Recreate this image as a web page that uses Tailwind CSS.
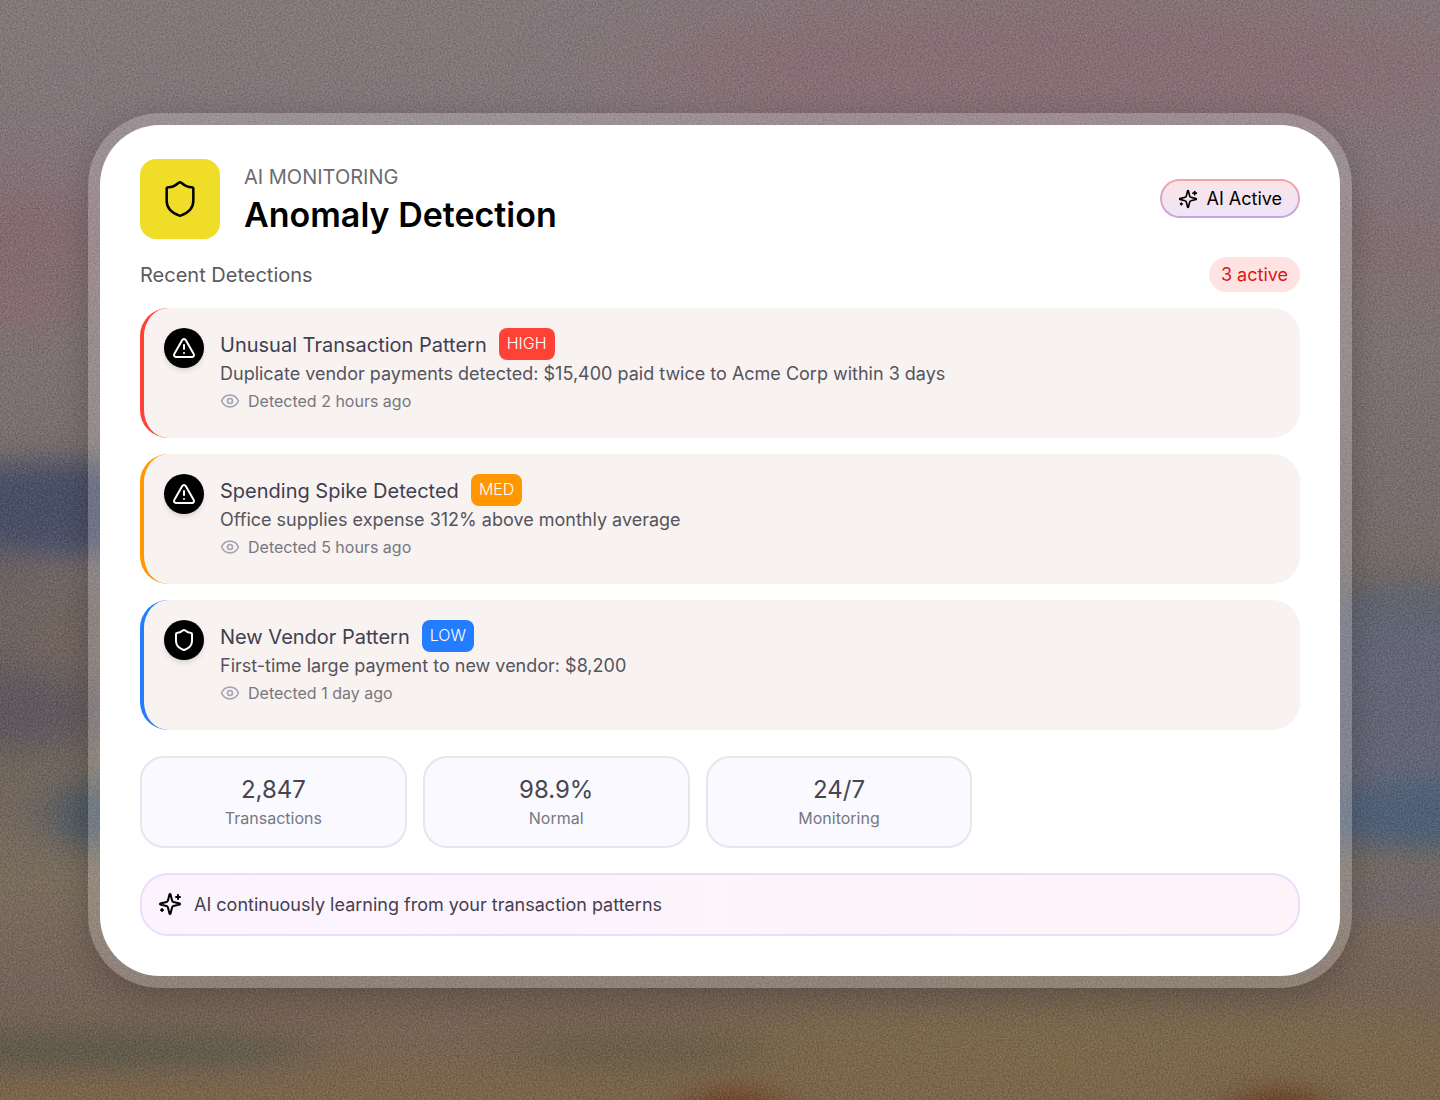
<!DOCTYPE html>
<html lang="en">
<head>
    <meta charset="UTF-8">
    <meta name="viewport" content="width=device-width, initial-scale=1.0">
    <title>Anomaly Detection</title>
    <script src="https://cdn.jsdelivr.net/npm/@tailwindcss/browser@4"></script>
</head>
<body class="relative isolate min-h-screen flex items-center justify-center px-[88px] py-[112px] bg-[#7c6c68] font-['Inter','Liberation_Sans',sans-serif] overflow-x-hidden">

<!-- Icons -->
<svg class="hidden">
    <symbol id="icon-shield" viewBox="0 0 24 24" fill="none" stroke="currentColor" stroke-linecap="round" stroke-linejoin="round">
        <path d="M20 13c0 5-3.5 7.5-7.66 8.95a1 1 0 0 1-.67-.01C7.5 20.5 4 18 4 13V6a1 1 0 0 1 1-1c2 0 4.5-1.2 6.24-2.72a1.17 1.17 0 0 1 1.52 0C14.51 3.81 17 5 19 5a1 1 0 0 1 1 1z"/>
    </symbol>
    <symbol id="icon-alert" viewBox="0 0 24 24" fill="none" stroke="currentColor" stroke-linecap="round" stroke-linejoin="round">
        <path d="m21.73 18-8-14a2 2 0 0 0-3.48 0l-8 14A2 2 0 0 0 4 21h16a2 2 0 0 0 1.73-3"/>
        <path d="M12 9v4"/>
        <path d="M12 17h.01"/>
    </symbol>
    <symbol id="icon-eye" viewBox="0 0 24 24" fill="none" stroke="currentColor" stroke-linecap="round" stroke-linejoin="round">
        <path d="M2.06 12.35a1 1 0 0 1 0-.7 10.75 10.75 0 0 1 19.88 0 1 1 0 0 1 0 .7 10.75 10.75 0 0 1-19.88 0"/>
        <circle cx="12" cy="12" r="3"/>
    </symbol>
    <symbol id="icon-sparkles" viewBox="0 0 24 24" fill="none" stroke="currentColor" stroke-linecap="round" stroke-linejoin="round">
        <path d="M9.94 15.5A2 2 0 0 0 8.5 14.06l-6.14-1.58a.5.5 0 0 1 0-.96L8.5 9.94A2 2 0 0 0 9.94 8.5l1.58-6.14a.5.5 0 0 1 .96 0l1.58 6.14a2 2 0 0 0 1.44 1.44l6.14 1.58a.5.5 0 0 1 0 .96l-6.14 1.58a2 2 0 0 0-1.44 1.44l-1.58 6.14a.5.5 0 0 1-.96 0z"/>
        <path d="M20 3v4"/>
        <path d="M22 5h-4"/>
        <path d="M4 17v2"/>
        <path d="M5 18H3"/>
    </symbol>
</svg>

<!-- Backdrop -->
<svg class="absolute inset-0 -z-10 w-full h-full" viewBox="0 0 1440 1100" preserveAspectRatio="none" aria-hidden="true">
    <defs>
        <linearGradient id="base" x1="0" y1="0" x2="0" y2="1">
            <stop offset="0" stop-color="#84797b"/>
            <stop offset="0.2" stop-color="#83757a"/>
            <stop offset="0.32" stop-color="#7f7373"/>
            <stop offset="0.5" stop-color="#776d6b"/>
            <stop offset="0.6" stop-color="#6b625f"/>
            <stop offset="0.8" stop-color="#7b6e5e"/>
            <stop offset="0.9" stop-color="#75645a"/>
            <stop offset="1" stop-color="#7d674c"/>
        </linearGradient>
        <filter id="soft" filterUnits="userSpaceOnUse" x="-200" y="-200" width="1840" height="1500" color-interpolation-filters="sRGB"><feGaussianBlur stdDeviation="26 14"/></filter>
        <filter id="wide" filterUnits="userSpaceOnUse" x="-300" y="-300" width="2040" height="1700" color-interpolation-filters="sRGB"><feGaussianBlur stdDeviation="60 30"/></filter>
        <filter id="grain" x="0" y="0" width="100%" height="100%" color-interpolation-filters="sRGB">
            <feTurbulence type="fractalNoise" baseFrequency="0.6" numOctaves="2" seed="4"/>
            <feColorMatrix values="1.5 0 0 0 -0.28  1.5 0 0 0 -0.28  1.5 0 0 0 -0.28  0 0 0 0 1"/>
        </filter>
    </defs>
    <rect width="1440" height="1100" fill="url(#base)"/>
    <g filter="url(#wide)">
        <ellipse cx="1060" cy="70" rx="420" ry="70" fill="#896f76"/>
        <ellipse cx="0" cy="240" rx="120" ry="60" fill="#866b71"/>
        <ellipse cx="1380" cy="245" rx="60" ry="25" fill="#85696b"/>
        <ellipse cx="1100" cy="1050" rx="420" ry="40" fill="#7d6b4a"/>
    </g>
    <g filter="url(#soft)">
        <ellipse cx="0" cy="305" rx="70" ry="14" fill="#8b6c71"/>
        <ellipse cx="60" cy="508" rx="170" ry="48" fill="#4a5068"/>
        <ellipse cx="0" cy="580" rx="40" ry="20" fill="#6b6260"/>
        <ellipse cx="80" cy="650" rx="60" ry="50" fill="#736660"/>
        <ellipse cx="10" cy="710" rx="90" ry="40" fill="#605a60"/>
        <ellipse cx="110" cy="815" rx="60" ry="34" fill="#4c5966"/>
        <rect x="1300" y="600" width="240" height="250" fill="#656777"/>
        <ellipse cx="1420" cy="605" rx="80" ry="22" fill="#606672"/>
        <ellipse cx="1440" cy="815" rx="110" ry="36" fill="#4f6179"/>
        <ellipse cx="1410" cy="895" rx="90" ry="20" fill="#72676f"/>
        <ellipse cx="80" cy="1050" rx="240" ry="18" fill="#5d5a4c"/>
        <ellipse cx="640" cy="1050" rx="130" ry="18" fill="#6a5f49"/>
        <ellipse cx="735" cy="1112" rx="44" ry="20" fill="#6b3418"/>
        <ellipse cx="1280" cy="1112" rx="44" ry="20" fill="#643018"/>
    </g>
    <rect class="mix-blend-soft-light" width="1440" height="1100" filter="url(#grain)" opacity="0.3"/>
</svg>

<main class="w-full max-w-[1264px] rounded-[72px] bg-white/20 p-3 shadow-[0_8px_32px_rgba(0,0,0,0.2)]">
    <div class="rounded-[60px] bg-white px-10 pt-[34px] pb-10">

        <!-- Header -->
        <header class="flex items-center justify-between">
            <div class="flex items-center gap-6">
                <div class="flex size-20 items-center justify-center rounded-2xl bg-[#efdd28]">
                    <svg class="size-10 stroke-[1.5]"><use href="#icon-shield"/></svg>
                </div>
                <div class="pt-1">
                    <p class="text-[20px] leading-7 text-[#6b6b70]">AI MONITORING</p>
                    <h1 class="text-[34px] leading-[48px] font-semibold text-black">Anomaly Detection</h1>
                </div>
            </div>
            <button type="button" class="flex h-[39px] items-center gap-2 rounded-full border-2 border-transparent px-4 text-[18px] text-black [background:linear-gradient(#fbe4e7,#efe4f7)_padding-box,linear-gradient(#f2a5a9,#c3a6e3)_border-box]">
                <svg class="size-5 stroke-2"><use href="#icon-sparkles"/></svg>
                AI Active
            </button>
        </header>

        <!-- Detections -->
        <section>
            <div class="mt-[18px] flex items-center justify-between">
                <h2 class="pt-[2px] text-[20px] text-[#5a5a60]">Recent Detections</h2>
                <span class="rounded-full bg-[#ffe3e3] px-3 text-[18px] leading-[35px] text-[#d81616]">3 active</span>
            </div>

            <ul class="mt-4 flex flex-col gap-4">
                <li class="flex gap-4 rounded-[28px] border-l-4 border-[#ff4136] bg-[#f8f2f1] px-5 pt-5 pb-[23px]">
                    <div class="flex size-10 shrink-0 items-center justify-center rounded-full bg-black text-white shadow-md">
                        <svg class="size-6 stroke-2"><use href="#icon-alert"/></svg>
                    </div>
                    <div>
                        <div class="flex h-8 items-center gap-3">
                            <h3 class="pt-[2px] text-[20px] text-[#3f3f50]">Unusual Transaction Pattern</h3>
                            <span class="rounded-lg bg-[#ff4136] px-2 pb-[2px] text-[16px] leading-[30px] font-light text-white">HIGH</span>
                        </div>
                        <p class="text-[18px] leading-7 text-[#54545c]">Duplicate vendor payments detected: $15,400 paid twice to Acme Corp within 3 days</p>
                        <p class="flex items-center gap-2 text-[16px] leading-[27px] text-[#77777f]">
                            <svg class="size-5 stroke-2 text-[#a3a6b4]"><use href="#icon-eye"/></svg>
                            Detected 2 hours ago
                        </p>
                    </div>
                </li>
                <li class="flex gap-4 rounded-[28px] border-l-4 border-[#ff9800] bg-[#f8f2f1] px-5 pt-5 pb-[23px]">
                    <div class="flex size-10 shrink-0 items-center justify-center rounded-full bg-black text-white shadow-md">
                        <svg class="size-6 stroke-2"><use href="#icon-alert"/></svg>
                    </div>
                    <div>
                        <div class="flex h-8 items-center gap-3">
                            <h3 class="pt-[2px] text-[20px] text-[#3f3f50]">Spending Spike Detected</h3>
                            <span class="rounded-lg bg-[#ff9800] px-2 pb-[2px] text-[16px] leading-[30px] font-light text-white">MED</span>
                        </div>
                        <p class="text-[18px] leading-7 text-[#54545c]">Office supplies expense 312% above monthly average</p>
                        <p class="flex items-center gap-2 text-[16px] leading-[27px] text-[#77777f]">
                            <svg class="size-5 stroke-2 text-[#a3a6b4]"><use href="#icon-eye"/></svg>
                            Detected 5 hours ago
                        </p>
                    </div>
                </li>
                <li class="flex gap-4 rounded-[28px] border-l-4 border-[#247cff] bg-[#f8f2f1] px-5 pt-5 pb-[23px]">
                    <div class="flex size-10 shrink-0 items-center justify-center rounded-full bg-black text-white shadow-md">
                        <svg class="size-6 stroke-2"><use href="#icon-shield"/></svg>
                    </div>
                    <div>
                        <div class="flex h-8 items-center gap-3">
                            <h3 class="pt-[2px] text-[20px] text-[#3f3f50]">New Vendor Pattern</h3>
                            <span class="rounded-lg bg-[#247cff] px-2 pb-[2px] text-[16px] leading-[30px] font-light text-white">LOW</span>
                        </div>
                        <p class="text-[18px] leading-7 text-[#54545c]">First-time large payment to new vendor: $8,200</p>
                        <p class="flex items-center gap-2 text-[16px] leading-[27px] text-[#77777f]">
                            <svg class="size-5 stroke-2 text-[#a3a6b4]"><use href="#icon-eye"/></svg>
                            Detected 1 day ago
                        </p>
                    </div>
                </li>
            </ul>
        </section>

        <!-- Stats -->
        <dl class="mt-[26px] grid grid-cols-[repeat(3,23%)] gap-4 text-center">
            <div class="flex flex-col-reverse rounded-3xl border-2 border-[#e8e6ec] bg-[#faf9ff] pt-4 pb-4">
                <dt class="text-[16px] leading-6 text-[#77777f]">Transactions</dt>
                <dd class="text-[24px] leading-8 text-[#46464e]">2,847</dd>
            </div>
            <div class="flex flex-col-reverse rounded-3xl border-2 border-[#e8e6ec] bg-[#faf9ff] pt-4 pb-4">
                <dt class="text-[16px] leading-6 text-[#77777f]">Normal</dt>
                <dd class="text-[24px] leading-8 text-[#46464e]">98.9%</dd>
            </div>
            <div class="flex flex-col-reverse rounded-3xl border-2 border-[#e8e6ec] bg-[#faf9ff] pt-4 pb-4">
                <dt class="text-[16px] leading-6 text-[#77777f]">Monitoring</dt>
                <dd class="text-[24px] leading-8 text-[#46464e]">24/7</dd>
            </div>
        </dl>

        <!-- Learning status -->
        <div class="mt-[25px] flex h-[63px] items-center gap-3 rounded-[28px] border-2 border-[#ecdcfd] bg-linear-to-r from-[#fbf4ff] to-[#fef3f8] px-4">
            <svg class="size-6 stroke-2"><use href="#icon-sparkles"/></svg>
            <p class="text-[18px] text-[#46404e]">AI continuously learning from your transaction patterns</p>
        </div>
    </div>
</main>
</body>
</html>
